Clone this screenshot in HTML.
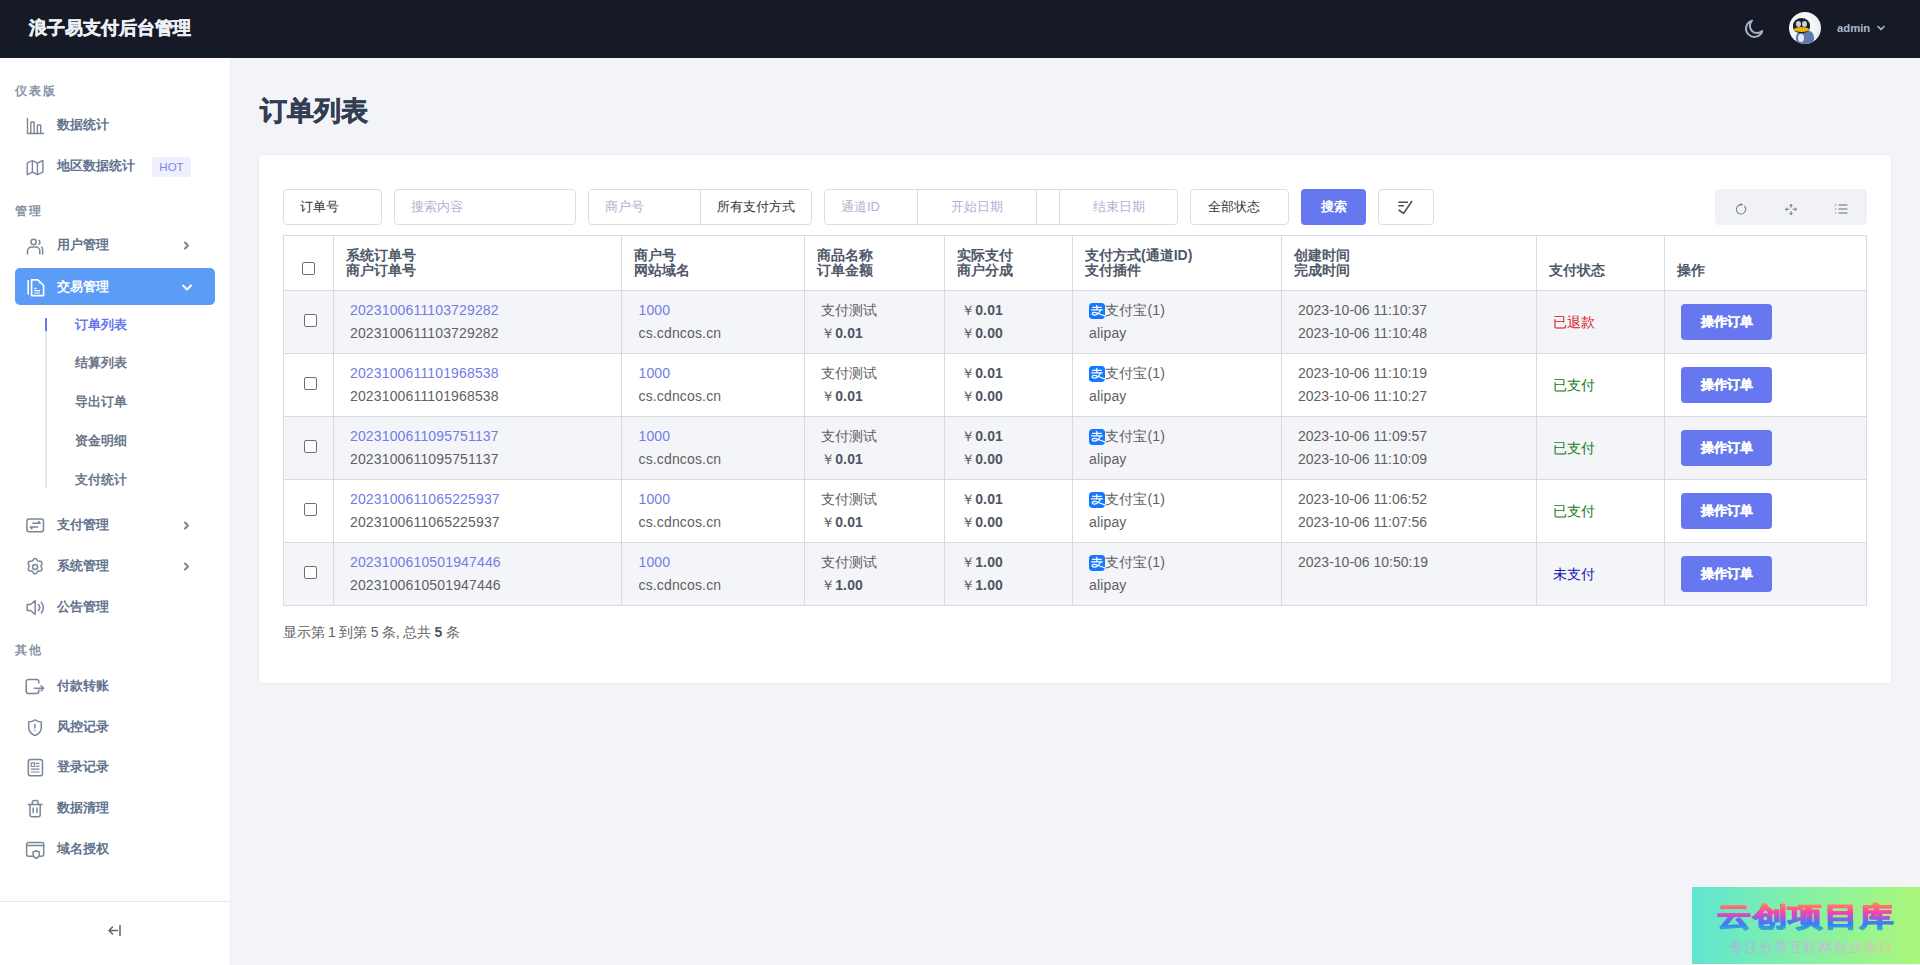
<!DOCTYPE html>
<html><head><meta charset="utf-8">
<style>
*{box-sizing:border-box;margin:0;padding:0}
html,body{width:1920px;height:965px;overflow:hidden}
body{font-family:"Liberation Sans",sans-serif;background:#f3f4f8;position:relative;color:#555}
.abs{position:absolute}
#hdr{left:0;top:0;width:1920px;height:58px;background:#151a26}
#hdr .ttl{position:absolute;left:29px;top:16px;font-size:18px;line-height:24px;font-weight:bold;color:#eef0f5;letter-spacing:0;-webkit-text-stroke:0.5px #eef0f5}
#side{left:0;top:58px;width:230px;height:907px;background:#fff;box-shadow:1px 0 0 #eceef2}
.sec{position:absolute;left:15px;font-size:12px;line-height:14px;color:#8792a5;letter-spacing:2px;font-weight:bold}
.mi{position:absolute;left:15px;width:200px;height:37px;border-radius:5px}
.mi .tx{position:absolute;left:42px;top:11px;font-size:13px;line-height:15px;color:#62728d;font-weight:bold}
.mi svg.ic{position:absolute;left:11px;top:10px;width:18px;height:18px;overflow:visible}
.mi .chev{position:absolute;left:166px;top:14px;width:10px;height:12px}
.mi.act{background:#5b9cf7}
.mi.act .tx{color:#fff}
.sub{position:absolute;left:75px;font-size:13px;line-height:15px;color:#6b7588;font-weight:bold}
#main-title{left:260px;top:94px;font-size:27px;line-height:34px;font-weight:bold;color:#333d52;-webkit-text-stroke:0.6px #333d52}
#card{left:259px;top:155px;width:1632px;height:528px;background:#fff;border-radius:4px;box-shadow:0 0 5px rgba(40,50,90,0.04)}
.inp{position:absolute;top:189px;height:36px;border:1px solid #dcdee5;border-radius:4px;background:#fff;font-size:13px;line-height:34px}
.ph{color:#adb3d2}
.dk{color:#333}

.hl{left:283px;width:1584px;height:1px;background:#d9dae1}
.vl{top:235px;width:1px;height:371px;background:#d9dae1}
.cb{position:absolute;width:13px;height:13px;border:1px solid #6f6f6f;border-radius:2px;background:#fff}
.th{position:absolute;font-size:14px;line-height:15px;font-weight:bold;color:#4f5868;white-space:nowrap}
.td{position:absolute;font-size:14px;line-height:23px;color:#5f5f5f;white-space:nowrap;letter-spacing:0.15px}
.td b{font-weight:bold;color:#4e5560}
.lk{color:#737ce6}
.yen{font-size:14px}
.ali{position:absolute;width:16px;height:16px;overflow:hidden;border-radius:3px}
.btn{position:absolute;width:91px;height:35.5px;border-radius:4px;background:#6777ef;color:#fff;font-size:13px;line-height:35.5px;font-weight:bold;text-align:center;-webkit-text-stroke:0.3px #fff}
</style></head>
<body>
<div id="hdr" class="abs">
  <div class="ttl">浪子易支付后台管理</div>
  <svg style="position:absolute;left:1743px;top:18px;width:22px;height:22px" viewBox="0 0 22 22" fill="none" stroke="#a6b4c8" stroke-width="2" stroke-linejoin="round"><path d="M19.3 13A8.3 8.3 0 1 1 9 2.6a6.8 6.8 0 0 0 10.3 10.4z"/></svg>
  <div style="position:absolute;left:1789px;top:12px;width:32px;height:32px;border-radius:50%;background:radial-gradient(circle at 40% 40%,#ffffff 0%,#f2f3f6 55%,#d5d9e0 100%);overflow:hidden">
    <div style="position:absolute;left:7px;top:18px;width:18px;height:16px;border-radius:45%;background:#5e79ad"></div>
    <div style="position:absolute;left:9px;top:22px;width:6px;height:8px;border-radius:50%;background:#e8ecf2"></div>
    <div style="position:absolute;left:4px;top:6px;width:17px;height:15px;border-radius:50% 50% 40% 40%;background:#1c2027"></div>
    <div style="position:absolute;left:7px;top:9px;width:5px;height:6px;border-radius:50%;background:#c9cfd8"></div>
    <div style="position:absolute;left:13px;top:9px;width:5px;height:6px;border-radius:50%;background:#c9cfd8"></div>
    <div style="position:absolute;left:5px;top:15px;width:15px;height:5px;border-radius:50%;background:#f1b50a"></div>
  </div>
  <div style="position:absolute;left:1837px;top:20px;font-size:11.3px;line-height:16px;font-weight:bold;color:#a9b8cc">admin</div>
  <svg style="position:absolute;left:1876px;top:25px;width:10px;height:7px" viewBox="0 0 10 7" fill="none" stroke="#a9b8cc" stroke-width="1.7" stroke-linecap="round" stroke-linejoin="round"><path d="M2 1.5l3 3 3-3"/></svg>

</div>
<div id="side" class="abs"></div>

<div class="sec" style="top:84px">仪表版</div>
<div class="mi" style="top:106px"><svg class="ic" viewBox="0 0 18 18" fill="none" stroke="#7a8699" stroke-width="1.4"><path d="M1.5 2v15.5h16.5"/><path d="M4.8 17V6.6a.6.6 0 0 1 .6-.6h2.1a.6.6 0 0 1 .6.6V17"/><path d="M11.4 17V9.6a.6.6 0 0 1 .6-.6h2.1a.6.6 0 0 1 .6.6V17"/></svg><div class="tx">数据统计</div></div>
<div class="mi" style="top:147px"><svg class="ic" viewBox="0 0 18 18" fill="none" stroke="#7a8699" stroke-width="1.4" stroke-linejoin="round"><path d="M1.2 6.2l5.2-2.7 5 2.7 5.5-2.7v11.6l-5.5 2.6-5-2.6-5.2 2.6z"/><path d="M6.4 3.5v11.6M11.4 6.2v11.1"/></svg><div class="tx">地区数据统计</div>
<div style="position:absolute;left:137px;top:10px;width:39px;height:20px;border-radius:3px;background:#eef0fe;color:#7a84ea;font-size:11.5px;line-height:20px;text-align:center">HOT</div></div>
<div class="sec" style="top:204px">管理</div>
<div class="mi" style="top:226px"><svg class="ic" viewBox="0 0 18 18" fill="none" stroke="#7a8699" stroke-width="1.5" stroke-linecap="butt"><circle cx="7.6" cy="5.9" r="2.6"/><path d="M12.4 4.3a2.2 2.2 0 0 1 0 4.2"/><path d="M1.5 18.5V15a4 4 0 0 1 4-4h4.3a4 4 0 0 1 4 4v3.5"/><path d="M15.4 10.9a4 4 0 0 1 1.2 3V18.5"/></svg><div class="tx">用户管理</div>
<svg class="chev" viewBox="0 0 10 12" fill="none" stroke="#7a8699" stroke-width="2" stroke-linecap="round" stroke-linejoin="round"><path d="M4 2.5l3 3-3 3"/></svg></div>
<div class="mi act" style="top:268px"><svg class="ic" viewBox="0 0 18 18" fill="none" stroke="#fff" stroke-width="1.6" stroke-linejoin="round"><path d="M2.2 1.9v14.7"/><path d="M5.6 1.9h6.2l5.8 5.5v10.2H5.6z"/><path d="M8.2 10.4h2.3M8.2 12.7h5.8M8.2 15h5.8" stroke-width="1.2"/><circle cx="13.4" cy="5" r="0.6" fill="#fff" stroke="none"/></svg><div class="tx">交易管理</div>
<svg class="chev" viewBox="0 0 12 10" style="width:12px;height:10px;left:166px;top:15px" fill="none" stroke="#fff" stroke-width="2" stroke-linecap="round" stroke-linejoin="round"><path d="M2 2.5l4 4 4-4"/></svg></div>
<div class="abs" style="left:45px;top:318px;width:2px;height:170px;background:#e6e8f0"></div>
<div class="abs" style="left:45px;top:318px;width:2px;height:13px;background:#6777ef"></div>
<div class="sub" style="top:317px;color:#6777ef">订单列表</div>
<div class="sub" style="top:355px">结算列表</div>
<div class="sub" style="top:394px">导出订单</div>
<div class="sub" style="top:433px">资金明细</div>
<div class="sub" style="top:472px">支付统计</div>
<div class="mi" style="top:506px"><svg class="ic" viewBox="0 0 18 18" fill="none" stroke="#7a8699" stroke-width="1.5" stroke-linecap="round" stroke-linejoin="round"><rect x="0.9" y="3" width="16.6" height="12.8" rx="2.2"/><path d="M6.8 7.2h7.4l-1.7-1.7"/><path d="M11.6 10.9H4.2l1.7 1.7"/></svg><div class="tx">支付管理</div>
<svg class="chev" viewBox="0 0 10 12" fill="none" stroke="#7a8699" stroke-width="2" stroke-linecap="round" stroke-linejoin="round"><path d="M4 2.5l3 3-3 3"/></svg></div>
<div class="mi" style="top:547px"><svg class="ic" viewBox="0 0 18 18" fill="none" stroke="#7a8699" stroke-width="1.5" stroke-linecap="round" stroke-linejoin="round"><path d="M7.3 2.6a2 2 0 0 1 3.6 0l.4.7a2 2 0 0 0 1.8 1l.8 0a2 2 0 0 1 1.8 3.1l-.4.7a2 2 0 0 0 0 2l.4.7a2 2 0 0 1-1.8 3.1h-.8a2 2 0 0 0-1.8 1l-.4.7a2 2 0 0 1-3.6 0l-.4-.7a2 2 0 0 0-1.8-1h-.8a2 2 0 0 1-1.8-3.1l.4-.7a2 2 0 0 0 0-2l-.4-.7A2 2 0 0 1 4.3 4.3h.8a2 2 0 0 0 1.8-1z"/><circle cx="9.1" cy="10" r="2.5"/></svg><div class="tx">系统管理</div>
<svg class="chev" viewBox="0 0 10 12" fill="none" stroke="#7a8699" stroke-width="2" stroke-linecap="round" stroke-linejoin="round"><path d="M4 2.5l3 3-3 3"/></svg></div>
<div class="mi" style="top:588px"><svg class="ic" viewBox="0 0 18 18" fill="none" stroke="#7a8699" stroke-width="1.5" stroke-linecap="round" stroke-linejoin="round"><path d="M1.2 6.5h3.4l4.6-3.8v13.6l-4.6-3.8H1.2z"/><path d="M12.4 6.6a4.6 4.6 0 0 1 0 6"/><path d="M15.3 4.2a8 8 0 0 1 0 10.8"/></svg><div class="tx">公告管理</div></div>
<div class="sec" style="top:643px">其他</div>
<div class="mi" style="top:667px"><svg class="ic" viewBox="0 0 18 18" fill="none" stroke="#7a8699" stroke-width="1.5" stroke-linecap="round" stroke-linejoin="round"><path d="M12.8 6V4.6a2.2 2.2 0 0 0-2.2-2.2H2.4A2.2 2.2 0 0 0 .2 4.6v9.7a2.2 2.2 0 0 0 2.2 2.2h8.2a2.2 2.2 0 0 0 2.2-2.2V13"/><path d="M8.3 11.2h9.3M15.1 8.7l2.5 2.5-2.5 2.5"/></svg><div class="tx">付款转账</div></div>
<div class="mi" style="top:708px"><svg class="ic" viewBox="0 0 18 18" fill="none" stroke="#7a8699" stroke-width="1.5" stroke-linecap="round" stroke-linejoin="round"><path d="M9 1.9c2 1.4 4 2 6.3 2.2v5.4c0 3.8-2.7 6.5-6.3 8.1-3.6-1.6-6.3-4.3-6.3-8.1V4.1C5 3.9 7 3.3 9 1.9z"/><path d="M8.9 6.5v3.6M8.9 12.5v.1"/></svg><div class="tx">风控记录</div></div>
<div class="mi" style="top:748px"><svg class="ic" viewBox="0 0 18 18" fill="none" stroke="#7a8699" stroke-width="1.5" stroke-linecap="round" stroke-linejoin="round"><rect x="2.3" y="1.6" width="14.2" height="16.2" rx="2.4"/><rect x="5.2" y="4.9" width="3.2" height="3.6" stroke-width="1.2"/><path d="M10.2 5.4h2.8M10.2 8.2h2.8M5.2 11.1h7.8M5.2 14h7.8" stroke-width="1.2"/></svg><div class="tx">登录记录</div></div>
<div class="mi" style="top:789px"><svg class="ic" viewBox="0 0 18 18" fill="none" stroke="#7a8699" stroke-width="1.5" stroke-linecap="round" stroke-linejoin="round"><path d="M2.3 5.5h13.7"/><path d="M6.3 5.5V3.6a2 2 0 0 1 2-2h1.8a2 2 0 0 1 2 2v1.9"/><path d="M4 5.5v10.3a2 2 0 0 0 2 2h6.2a2 2 0 0 0 2-2V5.5"/><path d="M7.2 9v4.6M11 9v4.6"/></svg><div class="tx">数据清理</div></div>
<div class="mi" style="top:830px"><svg class="ic" viewBox="0 0 18 18" fill="none" stroke="#7a8699" stroke-width="1.5" stroke-linecap="round" stroke-linejoin="round"><path d="M6.6 16.3H2.6a2 2 0 0 1-2-2V4.6a2 2 0 0 1 2-2h13.1a2 2 0 0 1 2 2v9.7a2 2 0 0 1-2 2h-2"/><path d="M.6 5.6h17.1"/><path d="M10.2 10.8l3.1 1.2v2.4c0 1.8-1.4 3.1-3.1 3.9-1.7-.8-3.1-2.1-3.1-3.9V12z"/></svg><div class="tx">域名授权</div></div>
<div class="abs" style="left:0;top:901px;width:230px;height:1px;background:#e6e8ee"></div>
<svg class="abs" style="left:107px;top:924px;width:16px;height:13px" viewBox="0 0 16 13" fill="none" stroke="#5c636e" stroke-width="1.5" stroke-linecap="round" stroke-linejoin="round"><path d="M13 1.5v10M10.5 6.5H2M5.5 3L2 6.5 5.5 10"/></svg>

<div id="main-title" class="abs">订单列表</div>
<div id="card" class="abs"></div>

<div class="inp dk" style="left:283px;width:99px;padding-left:16px">订单号</div>
<div class="inp ph" style="left:394px;width:182px;padding-left:16px">搜索内容</div>
<div class="inp" style="left:588px;width:224px">
  <span class="ph" style="position:absolute;left:16px">商户号</span>
  <div style="position:absolute;left:111px;top:0;width:1px;height:34px;background:#dcdee5"></div>
  <span class="dk" style="position:absolute;left:128px">所有支付方式</span>
</div>
<div class="inp" style="left:824px;width:354px">
  <span class="ph" style="position:absolute;left:16px">通道ID</span>
  <div style="position:absolute;left:92px;top:0;width:1px;height:34px;background:#dcdee5"></div>
  <span class="ph" style="position:absolute;left:93px;width:118px;text-align:center">开始日期</span>
  <div style="position:absolute;left:211px;top:0;width:1px;height:34px;background:#dcdee5"></div>
  <div style="position:absolute;left:234px;top:0;width:1px;height:34px;background:#dcdee5"></div>
  <span class="ph" style="position:absolute;left:235px;width:118px;text-align:center">结束日期</span>
</div>
<div class="inp dk" style="left:1190px;width:99px;padding-left:17px">全部状态</div>
<div class="abs" style="left:1301px;top:189px;width:65px;height:36px;border-radius:4px;background:#6777ef;color:#fff;font-size:13px;line-height:36px;font-weight:bold;text-align:center">搜索</div>
<div class="inp" style="left:1378px;width:56px">
  <svg style="position:absolute;left:17px;top:9px;width:18px;height:16px" viewBox="0 0 18 16" fill="none" stroke="#4a4f5a" stroke-width="1.5" stroke-linecap="butt" stroke-linejoin="miter"><path d="M2.4 3.2H12M2.4 6.8H8"/><path d="M2.7 11l4.9 3.4L16 2" stroke-width="1.6"/></svg>
</div>
<div class="abs" style="left:1715px;top:189px;width:152px;height:36px;border-radius:4px;background:#f0f2f5"></div>
<svg class="abs" style="left:1734px;top:202px;width:14px;height:14px" viewBox="0 0 14 14" fill="none" stroke="#7d838d" stroke-width="1.1"><path d="M7 2.6A4.7 4.7 0 1 0 10.4 4"/><path d="M6.6 1l2.6 1.6-2.6 1.7z" fill="#7d838d" stroke="none"/></svg>
<svg class="abs" style="left:1783px;top:201px;width:16px;height:16px" viewBox="0 0 16 16" fill="#7d838d" stroke="#7d838d" stroke-width="1.1"><path d="M8 2.8l2 2.3H6z M8 14.2l2-2.3H6z M1.8 8.3l2.3-2v4z M14.2 8.3l-2.3-2v4z" stroke="none"/><path d="M8 5v1.8M8 10v2M4 8.3h2.4M9.6 8.3H12" fill="none"/></svg>
<svg class="abs" style="left:1834px;top:202px;width:14px;height:14px" viewBox="0 0 14 14" fill="none" stroke="#9097a3" stroke-width="1.3" stroke-linecap="round"><path d="M5 3h8M5 7h8M5 11h8M1.5 3h.1M1.5 7h.1M1.5 11h.1"/></svg>

<div class="abs" style="left:283px;top:290px;width:1584px;height:63px;background:#f4f5f9"></div>
<div class="abs" style="left:283px;top:416px;width:1584px;height:63px;background:#f4f5f9"></div>
<div class="abs" style="left:283px;top:542px;width:1584px;height:63px;background:#f4f5f9"></div>
<div class="abs hl" style="top:235px"></div>
<div class="abs hl" style="top:290px"></div>
<div class="abs hl" style="top:353px"></div>
<div class="abs hl" style="top:416px"></div>
<div class="abs hl" style="top:479px"></div>
<div class="abs hl" style="top:542px"></div>
<div class="abs hl" style="top:605px"></div>
<div class="abs vl" style="left:283px"></div>
<div class="abs vl" style="left:333px"></div>
<div class="abs vl" style="left:621px"></div>
<div class="abs vl" style="left:804px"></div>
<div class="abs vl" style="left:944px"></div>
<div class="abs vl" style="left:1072px"></div>
<div class="abs vl" style="left:1281px"></div>
<div class="abs vl" style="left:1536px"></div>
<div class="abs vl" style="left:1664px"></div>
<div class="abs vl" style="left:1866px"></div>
<div class="cb" style="left:302px;top:262px"></div>
<div class="th" style="left:346.0px;top:248px">系统订单号<br>商户订单号</div>
<div class="th" style="left:634.0px;top:248px">商户号<br>网站域名</div>
<div class="th" style="left:817.0px;top:248px">商品名称<br>订单金额</div>
<div class="th" style="left:957.0px;top:248px">实际支付<br>商户分成</div>
<div class="th" style="left:1085.0px;top:248px">支付方式(通道ID)<br>支付插件</div>
<div class="th" style="left:1293.5px;top:248px">创建时间<br>完成时间</div>
<div class="th" style="left:1548.5px;top:248px"><br>支付状态</div>
<div class="th" style="left:1677.0px;top:248px"><br>操作</div>
<div class="cb" style="left:304px;top:314px"></div>
<div class="td" style="left:350px;top:299px"><span class="lk">2023100611103729282</span><br>2023100611103729282</div>
<div class="td" style="left:638.5px;top:299px"><span class="lk">1000</span><br>cs.cdncos.cn</div>
<div class="td" style="left:821px;top:299px">支付测试<br><span class="yen">￥</span><b>0.01</b></div>
<div class="td" style="left:961px;top:299px"><span class="yen">￥</span><b>0.01</b><br><span class="yen">￥</span><b>0.00</b></div>
<svg class="ali" style="left:1089px;top:303px" viewBox="0 0 16 16"><rect width="16" height="16" rx="3" fill="#1677ff"/><g stroke="#fff" stroke-width="1.2" fill="none" stroke-linecap="round"><path d="M3.6 4.3h8.8M2.6 6.8h10.8M7.8 2.3v4.5"/><path d="M11.4 6.8c-1 3-3 5.1-5.8 5.3-1.9.1-2.9-.9-2.3-1.9.7-1 2.9-1.1 5.5.1 2.6 1.2 5 2.1 7.1 2.6"/></g></svg>
<div class="td" style="left:1089px;top:299px"><span style="padding-left:16px">支付宝(1)</span><br>alipay</div>
<div class="td" style="letter-spacing:0;left:1298px;top:299px">2023-10-06 11:10:37<br>2023-10-06 11:10:48</div>
<div class="td" style="left:1553px;top:311px;color:#d9141e">已退款</div>
<div class="btn" style="left:1681px;top:304px">操作订单</div>
<div class="cb" style="left:304px;top:377px"></div>
<div class="td" style="left:350px;top:362px"><span class="lk">2023100611101968538</span><br>2023100611101968538</div>
<div class="td" style="left:638.5px;top:362px"><span class="lk">1000</span><br>cs.cdncos.cn</div>
<div class="td" style="left:821px;top:362px">支付测试<br><span class="yen">￥</span><b>0.01</b></div>
<div class="td" style="left:961px;top:362px"><span class="yen">￥</span><b>0.01</b><br><span class="yen">￥</span><b>0.00</b></div>
<svg class="ali" style="left:1089px;top:366px" viewBox="0 0 16 16"><rect width="16" height="16" rx="3" fill="#1677ff"/><g stroke="#fff" stroke-width="1.2" fill="none" stroke-linecap="round"><path d="M3.6 4.3h8.8M2.6 6.8h10.8M7.8 2.3v4.5"/><path d="M11.4 6.8c-1 3-3 5.1-5.8 5.3-1.9.1-2.9-.9-2.3-1.9.7-1 2.9-1.1 5.5.1 2.6 1.2 5 2.1 7.1 2.6"/></g></svg>
<div class="td" style="left:1089px;top:362px"><span style="padding-left:16px">支付宝(1)</span><br>alipay</div>
<div class="td" style="letter-spacing:0;left:1298px;top:362px">2023-10-06 11:10:19<br>2023-10-06 11:10:27</div>
<div class="td" style="left:1553px;top:374px;color:#167a16">已支付</div>
<div class="btn" style="left:1681px;top:367px">操作订单</div>
<div class="cb" style="left:304px;top:440px"></div>
<div class="td" style="left:350px;top:425px"><span class="lk">2023100611095751137</span><br>2023100611095751137</div>
<div class="td" style="left:638.5px;top:425px"><span class="lk">1000</span><br>cs.cdncos.cn</div>
<div class="td" style="left:821px;top:425px">支付测试<br><span class="yen">￥</span><b>0.01</b></div>
<div class="td" style="left:961px;top:425px"><span class="yen">￥</span><b>0.01</b><br><span class="yen">￥</span><b>0.00</b></div>
<svg class="ali" style="left:1089px;top:429px" viewBox="0 0 16 16"><rect width="16" height="16" rx="3" fill="#1677ff"/><g stroke="#fff" stroke-width="1.2" fill="none" stroke-linecap="round"><path d="M3.6 4.3h8.8M2.6 6.8h10.8M7.8 2.3v4.5"/><path d="M11.4 6.8c-1 3-3 5.1-5.8 5.3-1.9.1-2.9-.9-2.3-1.9.7-1 2.9-1.1 5.5.1 2.6 1.2 5 2.1 7.1 2.6"/></g></svg>
<div class="td" style="left:1089px;top:425px"><span style="padding-left:16px">支付宝(1)</span><br>alipay</div>
<div class="td" style="letter-spacing:0;left:1298px;top:425px">2023-10-06 11:09:57<br>2023-10-06 11:10:09</div>
<div class="td" style="left:1553px;top:437px;color:#167a16">已支付</div>
<div class="btn" style="left:1681px;top:430px">操作订单</div>
<div class="cb" style="left:304px;top:503px"></div>
<div class="td" style="left:350px;top:488px"><span class="lk">2023100611065225937</span><br>2023100611065225937</div>
<div class="td" style="left:638.5px;top:488px"><span class="lk">1000</span><br>cs.cdncos.cn</div>
<div class="td" style="left:821px;top:488px">支付测试<br><span class="yen">￥</span><b>0.01</b></div>
<div class="td" style="left:961px;top:488px"><span class="yen">￥</span><b>0.01</b><br><span class="yen">￥</span><b>0.00</b></div>
<svg class="ali" style="left:1089px;top:492px" viewBox="0 0 16 16"><rect width="16" height="16" rx="3" fill="#1677ff"/><g stroke="#fff" stroke-width="1.2" fill="none" stroke-linecap="round"><path d="M3.6 4.3h8.8M2.6 6.8h10.8M7.8 2.3v4.5"/><path d="M11.4 6.8c-1 3-3 5.1-5.8 5.3-1.9.1-2.9-.9-2.3-1.9.7-1 2.9-1.1 5.5.1 2.6 1.2 5 2.1 7.1 2.6"/></g></svg>
<div class="td" style="left:1089px;top:488px"><span style="padding-left:16px">支付宝(1)</span><br>alipay</div>
<div class="td" style="letter-spacing:0;left:1298px;top:488px">2023-10-06 11:06:52<br>2023-10-06 11:07:56</div>
<div class="td" style="left:1553px;top:500px;color:#167a16">已支付</div>
<div class="btn" style="left:1681px;top:493px">操作订单</div>
<div class="cb" style="left:304px;top:566px"></div>
<div class="td" style="left:350px;top:551px"><span class="lk">2023100610501947446</span><br>2023100610501947446</div>
<div class="td" style="left:638.5px;top:551px"><span class="lk">1000</span><br>cs.cdncos.cn</div>
<div class="td" style="left:821px;top:551px">支付测试<br><span class="yen">￥</span><b>1.00</b></div>
<div class="td" style="left:961px;top:551px"><span class="yen">￥</span><b>1.00</b><br><span class="yen">￥</span><b>1.00</b></div>
<svg class="ali" style="left:1089px;top:555px" viewBox="0 0 16 16"><rect width="16" height="16" rx="3" fill="#1677ff"/><g stroke="#fff" stroke-width="1.2" fill="none" stroke-linecap="round"><path d="M3.6 4.3h8.8M2.6 6.8h10.8M7.8 2.3v4.5"/><path d="M11.4 6.8c-1 3-3 5.1-5.8 5.3-1.9.1-2.9-.9-2.3-1.9.7-1 2.9-1.1 5.5.1 2.6 1.2 5 2.1 7.1 2.6"/></g></svg>
<div class="td" style="left:1089px;top:551px"><span style="padding-left:16px">支付宝(1)</span><br>alipay</div>
<div class="td" style="letter-spacing:0;left:1298px;top:551px">2023-10-06 10:50:19<br></div>
<div class="td" style="left:1553px;top:563px;color:#1414b4">未支付</div>
<div class="btn" style="left:1681px;top:556px">操作订单</div>
<div class="td" style="left:283px;top:624px;font-size:14px;line-height:16px;letter-spacing:-0.2px">显示第 1 到第 5 条, 总共 <b>5</b> 条</div>

<div class="abs" style="left:1692px;top:887px;width:228px;height:77px;background:linear-gradient(90deg,#5fe5d2 0%,#83f0a8 45%,#abf77a 100%)"></div>
<svg class="abs" style="left:1712px;top:896px;width:200px;height:40px" viewBox="0 0 200 40"><defs><linearGradient id="wg" x1="0" y1="0" x2="0" y2="1"><stop offset="0" stop-color="#ff9a3c"/><stop offset="0.35" stop-color="#ff3fb0"/><stop offset="0.72" stop-color="#3a7bff"/><stop offset="1" stop-color="#2fc0c0"/></linearGradient></defs><g transform="translate(0,30) scale(1,0.78)"><text x="5" y="0" font-family="Liberation Sans, sans-serif" font-size="35" font-weight="bold" letter-spacing="1" fill="url(#wg)" stroke="url(#wg)" stroke-width="1.6" stroke-linejoin="round">云创项目库</text></g></svg>
<div class="abs" style="left:1729px;top:940px;font-family:'Liberation Serif',serif;font-size:14px;line-height:16px;white-space:nowrap;letter-spacing:0.9px;background:linear-gradient(90deg,#b9a6e6,#c9b3e0 60%,#e8c0a8);-webkit-background-clip:text;background-clip:text;color:transparent">专注分享互联网创业项目</div>
</body></html>
